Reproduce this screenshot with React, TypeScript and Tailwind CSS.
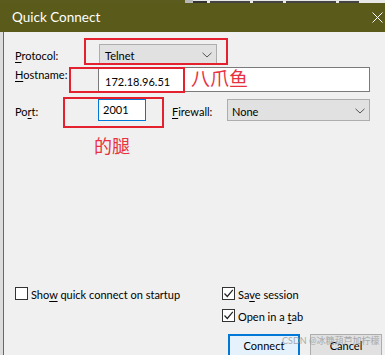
import React from "react";

const Chevron = () => (
  <svg width="10" height="6" viewBox="0 0 10 6" className="shrink-0">
    <path d="M0.5 0.8 L5 5 L9.5 0.8" fill="none" stroke="#555" strokeWidth="1" />
  </svg>
);

const Check = () => (
  <svg width="11" height="11" viewBox="0 0 11 11">
    <path d="M1.5 5.5 L4.3 8.5 L9.8 1.8" fill="none" stroke="#222" strokeWidth="1.2" />
  </svg>
);

const Box = ({ checked }: { checked?: boolean }) => (
  <div className="w-[13px] h-[13px] border border-[#333] bg-white flex items-center justify-center shrink-0">
    {checked ? <Check /> : null}
  </div>
);

const U = ({ children }: { children: React.ReactNode }) => (
  <span className="underline underline-offset-[2px] decoration-[1px]">{children}</span>
);

export default function App() {
  return (
    <div
      className="relative w-[385px] h-[355px] overflow-hidden bg-[#f0f0f0] flex flex-col text-[11px] leading-[15px] text-black"
      style={{ fontFamily: 'Lato, "Noto Sans CJK SC", sans-serif' }}
    >
      {/* top strip of background window */}
      <div className="h-[3px] flex shrink-0">
        <div className="w-[185px] bg-[#5a5b1c]" />
        <div className="w-[8px] bg-[#b8b8b8]" />
        <div className="flex-1 bg-[#e8e8e8] flex items-end gap-[3px] overflow-hidden">
          <div className="w-[14px] h-[2px] bg-[#333]" />
          <div className="w-[40px] h-[2px] bg-[#444]" />
          <div className="w-[30px] h-[2px] bg-[#444]" />
          <div className="w-[50px] h-[2px] bg-[#444]" />
          <div className="w-[20px] h-[2px] bg-[#444]" />
        </div>
      </div>
      {/* title bar */}
      <div className="h-[29px] shrink-0 bg-[#5a5b1a] flex items-center justify-between pl-[12px] pr-[2px]">
        <span className="text-white text-[13.5px] leading-none">Quick Connect</span>
        <svg width="11" height="11" viewBox="0 0 11 11">
          <path d="M0.5 0.5 L10.5 10.5 M10.5 0.5 L0.5 10.5" stroke="#ffffff" strokeWidth="1" />
        </svg>
      </div>
      {/* body */}
      <div className="flex-1 flex min-h-0">
        <div className="w-[3px] bg-[#dcdcdc] shrink-0" />
        <div className="w-[1px] bg-[#6a6a50] shrink-0" />
        <div className="flex-1 flex flex-col pl-[11px] pt-[12px]">
          {/* protocol row */}
          <div className="flex items-center h-[20px]">
            <div className="w-[84px] pt-[2px]">
              <U>P</U>rotocol:
            </div>
            <div className="w-[118px] h-[20px] bg-[#e1e1e1] border border-[#adadad] flex items-center justify-between pl-[5px] pr-[4px] pt-[2px]">
              <span>Telnet</span>
              <Chevron />
            </div>
          </div>
          {/* hostname row */}
          <div className="flex items-center h-[25px] mt-[3px]">
            <div className="w-[83px] self-start">
              <U>H</U>ostname:
            </div>
            <div className="w-[272px] h-[25px] bg-white border border-[#7a7a7a] flex items-center pl-[6px] pt-[3px]">
              172.18.96.51
            </div>
          </div>
          {/* port row */}
          <div className="flex items-center h-[23px] mt-[7px]">
            <div className="w-[83px] pt-[2px]">
              Po<U>r</U>t:
            </div>
            <div className="w-[48px] h-[22px] bg-white border border-[#0078d7] flex items-center pl-[4px] pb-[2px]">
              2001
            </div>
            <div className="w-[55px] ml-[26px] pt-[2px]">
              <U>F</U>irewall:
            </div>
            <div className="w-[143px] h-[22px] bg-[#e1e1e1] border border-[#adadad] flex items-center justify-between pl-[4px] pr-[4px] pt-[2px]">
              <span>None</span>
              <Chevron />
            </div>
          </div>
          {/* checkboxes */}
          <div className="flex mt-[165px]">
            <div className="w-[207px] flex items-center gap-[3px] h-[14px]">
              <Box />
              <span className="pt-[2px]">
                Sho<U>w</U> quick connect on startup
              </span>
            </div>
            <div className="flex items-center gap-[3px] h-[14px]">
              <Box checked />
              <span className="pt-[2px]">
                Sa<U>v</U>e session
              </span>
            </div>
          </div>
          <div className="flex mt-[8px]">
            <div className="w-[207px]" />
            <div className="flex items-center gap-[3px] h-[14px]">
              <Box checked />
              <span className="pt-[2px]">
                Open in a <U>t</U>ab
              </span>
            </div>
          </div>
          <div className="flex mt-[12px] gap-[10px] pl-[213px]">
            <div className="w-[72px] h-[23px] shrink-0 bg-[#e5f1fb] border-2 border-[#0078d7] flex items-center justify-center">
              Connect
            </div>
            <div className="w-[72px] h-[23px] shrink-0 bg-[#e1e1e1] border border-[#adadad] flex items-center justify-center">
              Cancel
            </div>
          </div>
        </div>
      </div>

      {/* red annotation boxes */}
      <div className="absolute left-[84px] top-[38px] w-[144px] h-[27px] border-2 border-[#e3212f]" />
      <div className="absolute left-[69px] top-[67px] w-[116px] h-[26px] border-2 border-[#e3212f]" />
      <div className="absolute left-[63px] top-[97px] w-[101px] h-[31px] border-2 border-[#e3212f]" />
      <div className="absolute left-[191px] top-[66px] text-[19px] leading-[26px] text-[#e8323f]">八爪鱼</div>
      <div className="absolute left-[94px] top-[133px] text-[18px] leading-[26px] text-[#e8323f]">的腿</div>
      {/* watermark */}
      <div className="absolute left-[282px] top-[335px] text-[9px] leading-[12px] text-[#9a9a9a] opacity-80">
        CSDN @冰糖葫芦加柠檬
      </div>
    </div>
  );
}
